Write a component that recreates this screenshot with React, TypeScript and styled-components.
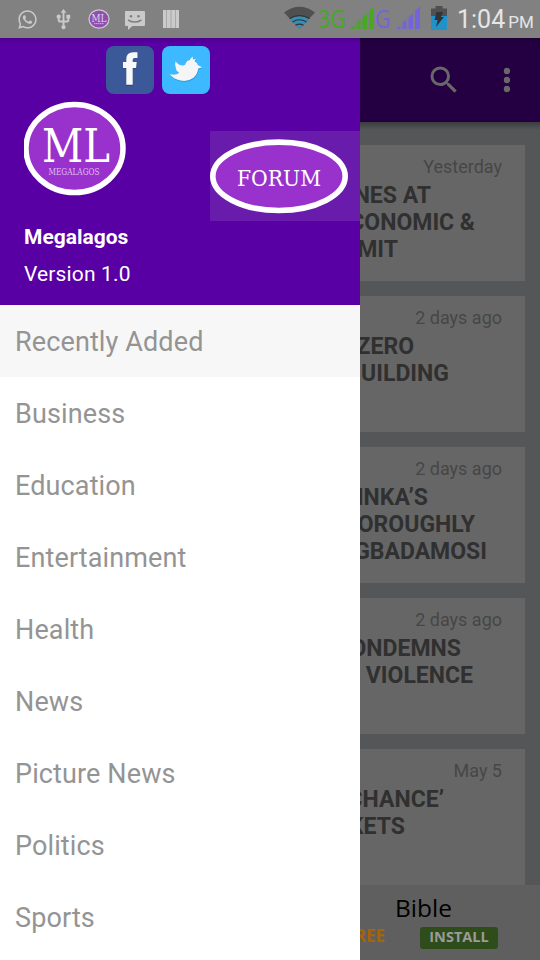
import React from 'react';
import styled, { createGlobalStyle } from 'styled-components';
import { FaWhatsapp } from 'react-icons/fa';
import { MdUsb, MdSearch } from 'react-icons/md';

interface Line {
  text: string;
  end: number;
}

interface Story {
  date: string;
  lines: Line[];
}

const sections = [
  'Recently Added',
  'Business',
  'Education',
  'Entertainment',
  'Health',
  'News',
  'Picture News',
  'Politics',
  'Sports'
];

// end is where each headline line stops, measured from the drawer's edge
const stories: Story[] = [
  {
    date: 'Yesterday',
    lines: [
      { text: 'NES AT', end: 71 },
      { text: 'CONOMIC &', end: 115 },
      { text: 'MIT', end: 38 }
    ]
  },
  {
    date: '2 days ago',
    lines: [
      { text: 'ZERO', end: 54 },
      { text: 'UILDING', end: 89 }
    ]
  },
  {
    date: '2 days ago',
    lines: [
      { text: 'INKA’S', end: 68 },
      { text: 'OROUGHLY', end: 115 },
      { text: 'GBADAMOSI', end: 127 }
    ]
  },
  {
    date: '2 days ago',
    lines: [
      { text: 'ONDEMNS', end: 101 },
      { text: 'VIOLENCE', end: 113 }
    ]
  },
  {
    date: 'May 5',
    lines: [
      { text: 'CHANCE’', end: 84 },
      { text: 'KETS', end: 45 }
    ]
  }
];

const serif = 'DejaVu Serif Condensed, DejaVu Serif, serif';

const MiniLogo = () => (
  <svg width="22" height="20" viewBox="0 0 22 20">
    <ellipse cx="11" cy="10" rx="10" ry="9.2" fill="#8e4fae" stroke="#cfc8d4" strokeWidth="1.2" />
    <text x="11" y="12.5" textAnchor="middle" fontFamily={serif} fontSize="10.500" fill="#e0d8e6" textLength="15" lengthAdjust="spacingAndGlyphs">ML</text>
    <path d="M6 14.6h10" stroke="#c9b3d6" strokeWidth="1" strokeDasharray="1.5 .5" />
  </svg>
);

const Message = () => (
  <svg width="20" height="20" viewBox="0 0 20 20">
    <path d="M1 1h18q1 0 1 1v13q0 1-1 1H7.500L3 20v-4H1q-1 0-1-1V2q0-1 1-1z" fill="#cacaca" />
    <circle cx="6" cy="6.200" r="1.300" fill="#818181" />
    <circle cx="13.500" cy="6.200" r="1.300" fill="#818181" />
    <path d="M3 10q6.800 4.200 13.500 0" fill="none" stroke="#818181" strokeWidth="1.500" />
  </svg>
);

const Bars = () => (
  <svg width="16" height="18" viewBox="0 0 16 18">
    <path d="M0 0h16v18H0z" fill="#a8a8a8" />
    <path d="M0 0h3v18H0zM4 0h3.500v18H4zM8.500 0H12v18H8.500zM13 0h3v18h-3z" fill="#cacaca" />
  </svg>
);

const Wifi = () => (
  <svg width="31" height="24" viewBox="0 0 31 24">
    <path d="M0 6.500Q15.500-5 31 6.500L15.500 23z" fill="#505050" />
    <path d="M6 13q9.500-5.500 19 0L15.500 23z" fill="#3490b8" />
    <path d="M5.500 12.500q10-6 20 0M8.500 16q7-4.500 14 0M11.500 19.300q4-2.500 8 0" fill="none" stroke="#333" strokeWidth="1.200" />
  </svg>
);

const Signal = ({ color }: { color: string }) => (
  <svg width="24" height="23" viewBox="0 0 24 23">
    <path d="M0 23l4.500-4v4zM6.500 17l4-4v10h-4zM12.500 11.500l4.500-4.500v16h-4.500zM19 5l5-5v23h-5z" fill={color} />
  </svg>
);

const Battery = () => (
  <svg width="16" height="24" viewBox="0 0 16 24">
    <path d="M4.500 0h7v2.500H16V10H0V2.500h4.500z" fill="#505050" />
    <path d="M0 10h16v14H0z" fill="#2191c9" />
    <path d="M5.500 6h6.500l-2 5h3L5 21l1.500-7H3.500z" fill="#303438" />
  </svg>
);

const Facebook = () => (
  <svg width="48" height="48" viewBox="0 0 48 48">
    <rect width="48" height="48" rx="8" fill="#3b5998" />
    <path d="M20.300 40V23H17v-6h3.300v-3.500q0-7 7-7H32v5.700h-3.500q-1.800 0-1.800 2V17h4.300l-.6 6h-3.700v17z" fill="#1f3770" opacity=".5" />
    <path d="M20.300 38.800V22H17v-6h3.300v-3q0-6.700 7-6.700H31.500V12h-3q-1.800 0-1.800 2v2h4l-.6 6h-3.400v16.800z" fill="#f8f8f8" />
  </svg>
);

const bird = 'M8 28.300q4 1 7.500-.3 1.500-.8 1.200-1.800-2.700-1-2.700-3.400-1.500-3.300-.5-7.500 3.200 4.500 8.200 4.200 1.600-.3 2.300-2.700.8-2 3.800-2.800.8-2.400 3.200-3.200l-.2 2.600 3-.4-1.200 2.200q2.700 1.500 3.400 4l4.200 2-4 1.400q-.5 5.400-4.700 9.200-5.500 4.200-13 2.800Q11 33 8 28.300z';

const Twitter = () => (
  <svg width="48" height="48" viewBox="0 0 48 48">
    <rect width="48" height="48" rx="8" fill="#3cb9ff" />
    <path d={bird} fill="#1573b0" opacity=".4" transform="translate(.5 1)" />
    <path d={bird} fill="#f5f5f5" />
  </svg>
);

const Logo = () => (
  <svg width="103" height="96" viewBox="0 0 103 96">
    <ellipse cx="50.500" cy="47.500" rx="48.500" ry="44" fill="#9932cc" stroke="#fff" strokeWidth="5.500" />
    <text x="18" y="60.500" fontFamily={serif} fontSize="46" fill="#fff" textLength="68" lengthAdjust="spacingAndGlyphs">ML</text>
    <text x="24.500" y="73.500" fontFamily={serif} fontSize="8.500" fill="#e0bdf2" textLength="51" lengthAdjust="spacingAndGlyphs">MEGALAGOS</text>
  </svg>
);

const Forum = () => (
  <svg width="138" height="75" viewBox="0 0 138 75">
    <ellipse cx="69" cy="37.300" rx="66.200" ry="34.200" fill="#9932cc" stroke="#fff" strokeWidth="5.600" />
    <text x="27" y="47" fontFamily={serif} fontSize="23" fill="#fff" textLength="84" lengthAdjust="spacingAndGlyphs">FORUM</text>
  </svg>
);

const App: React.FC = () => (
  <Screen>
    <GlobalStyle />
    <StatusBar>
      <Notifications>
        <FaWhatsapp size={21} />
        <MdUsb size={23} />
        <MiniLogo />
        <Message />
        <Bars />
      </Notifications>
      <SystemInfo>
        <Wifi />
        <Network color="#46a823" width={28}>3G</Network>
        <Signal color="#46a823" />
        <Network color="#7464dc" width={17}>G</Network>
        <Signal color="#7464dc" />
        <Battery />
        <Clock>1:04<small>PM</small></Clock>
      </SystemInfo>
    </StatusBar>
    <Body>
      <Drawer>
        <DrawerHeader>
          <Social>
            <Facebook />
            <Twitter />
          </Social>
          <Brand>
            <Logo />
            <ForumButton>
              <Forum />
            </ForumButton>
          </Brand>
          <AppName>Megalagos</AppName>
          <Version>Version 1.0</Version>
        </DrawerHeader>
        {sections.map((section, i) => (
          <MenuItem key={section} $active={i === 0}>{section}</MenuItem>
        ))}
      </Drawer>
      <Main>
        <Toolbar>
          <MdSearch size={36} />
          <svg width="8" height="26" viewBox="0 0 8 26">
            <circle cx="4" cy="4" r="3.200" fill="#686868" />
            <circle cx="4" cy="13" r="3.200" fill="#686868" />
            <circle cx="4" cy="22" r="3.200" fill="#686868" />
          </svg>
        </Toolbar>
        <Feed>
          {stories.map((story, i) => (
            <Card key={i}>
              <DateLabel>{story.date}</DateLabel>
              {story.lines.map(line => (
                <Headline key={line.text} $end={line.end}>
                  <span>{line.text}</span>
                </Headline>
              ))}
            </Card>
          ))}
        </Feed>
        <Ad>
          <AdTitle>Bible</AdTitle>
          <AdRow>
            <Free><span>REE</span></Free>
            <Install>INSTALL</Install>
          </AdRow>
        </Ad>
      </Main>
    </Body>
  </Screen>
);

export default App;

const GlobalStyle = createGlobalStyle`
  * {
    box-sizing: border-box;
  }
  body {
    margin: 0;
    font-family: Roboto, sans-serif;
  }
  svg {
    display: block;
    flex: none;
  }
`;

const Screen = styled.div`
  display: flex;
  flex-direction: column;
  width: 540px;
  height: 960px;
  overflow: hidden;
`;

const StatusBar = styled.div`
  display: flex;
  justify-content: space-between;
  flex: none;
  height: 38px;
  background: #818181;
`;

const Notifications = styled.div`
  display: flex;
  align-items: center;
  padding-left: 17px;
  color: #cacaca;

  svg:nth-child(2) {
    margin-left: 14px;
  }
  svg:nth-child(3) {
    margin-left: 13px;
  }
  svg:nth-child(4) {
    margin-left: 15px;
    margin-top: 2px;
  }
  svg:nth-child(5) {
    margin-left: 18px;
  }
`;

const SystemInfo = styled.div`
  display: flex;
  padding: 6px 7px 0 0;

  svg:nth-of-type(2) {
    margin-left: 4px;
  }
  svg:nth-of-type(3) {
    margin-left: 4px;
  }
  svg:nth-of-type(4) {
    margin-left: 11px;
  }
`;

const Network = styled.span<{ color: string; width: number }>`
  width: ${p => p.width}px;
  margin-left: ${p => (p.width > 20 ? 3 : 1)}px;
  font: 26px/24px 'Open Sans', sans-serif;
  color: ${p => p.color};
  white-space: nowrap;
  transform: scaleX(.82);
  transform-origin: left;
`;

const Clock = styled.span`
  width: 76px;
  margin-left: 10px;
  font-size: 25px;
  line-height: 28px;
  color: #e6e6e6;
  white-space: nowrap;

  small {
    margin-left: 3px;
    font-size: 17px;
  }
`;

const Body = styled.div`
  display: flex;
  flex: 1;
  min-height: 0;
`;

const Drawer = styled.nav`
  flex: none;
  width: 360px;
  background: #fff;
`;

const DrawerHeader = styled.header`
  height: 267px;
  padding-top: 8px;
  color: #fff;
  background: linear-gradient(#4c008d, #5900a5 6px);
`;

const Social = styled.div`
  display: flex;
  gap: 8px;
  padding-left: 106px;
`;

const Brand = styled.div`
  display: flex;
  justify-content: space-between;
  height: 127px;
  padding: 7px 0 0 24px;
`;

const ForumButton = styled.div`
  width: 150px;
  height: 90px;
  margin-top: 30px;
  padding-top: 8px;
  background: #691bab;
`;

const AppName = styled.div`
  padding-left: 24px;
  font-size: 21px;
  font-weight: 700;
  line-height: 32px;
`;

const Version = styled.div`
  padding-left: 24px;
  font-size: 21px;
  line-height: 43px;
  letter-spacing: .15px;
`;

const MenuItem = styled.div<{ $active: boolean }>`
  height: 72px;
  padding-left: 15px;
  font-size: 27px;
  line-height: 75px;
  letter-spacing: .12px;
  color: #949494;
  background: ${p => (p.$active ? '#f7f7f7' : '#fff')};
`;

const Main = styled.main`
  display: flex;
  flex-direction: column;
  width: 180px;
  overflow: hidden;
  background: #545658;
`;

const Toolbar = styled.div`
  display: flex;
  align-items: center;
  flex: none;
  height: 84px;
  padding-left: 66px;
  gap: 41px;
  color: #686868;
  background: linear-gradient(#1e0039, #240042 6px);
`;

const Feed = styled.div`
  display: flex;
  flex-direction: column;
  gap: 15px;
  flex: 1;
  min-height: 0;
  overflow: hidden;
  padding: 23px 15px 0 0;
  background: linear-gradient(#3b3c3d, #545658 8px);
`;

const Card = styled.article`
  flex: none;
  height: 136px;
  padding-top: 8px;
  overflow: hidden;
  background: #666;
`;

const DateLabel = styled.div`
  height: 29px;
  padding-right: 23px;
  font-size: 18px;
  line-height: 28px;
  text-align: right;
  color: #464646;
`;

const Headline = styled.div<{ $end: number }>`
  display: flex;
  justify-content: flex-end;
  width: ${p => p.$end}px;
  font-size: 23px;
  font-weight: 700;
  line-height: 27px;
  white-space: nowrap;
  color: #303030;
`;

const Ad = styled.aside`
  flex: none;
  height: 75px;
  background: #5f5f5f;
`;

const AdTitle = styled.div`
  height: 42px;
  padding-left: 35px;
  font: 24.500px/46px 'Open Sans', sans-serif;
  color: #000;
`;

const AdRow = styled.div`
  display: flex;
`;

const Free = styled.div`
  display: flex;
  justify-content: flex-end;
  width: 25px;
  margin-right: 35px;
  font: 700 17px/18px 'Open Sans', sans-serif;
  color: #a66500;
`;

const Install = styled.div`
  width: 78px;
  height: 22px;
  border-radius: 3px;
  font: 700 14.500px/20px 'Open Sans', sans-serif;
  text-align: center;
  color: #9b9b9b;
  background: #2f4c1b;
`;
